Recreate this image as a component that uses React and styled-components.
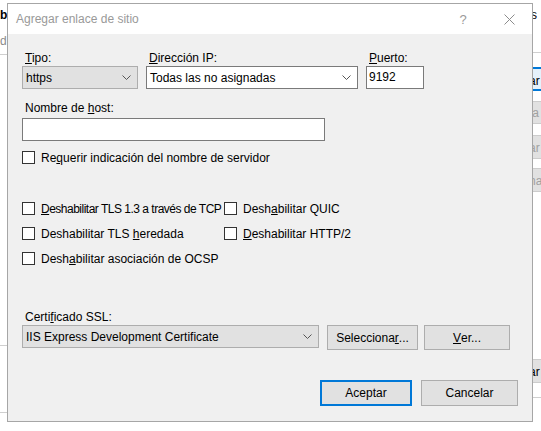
import React from 'react';
import styled, { createGlobalStyle } from 'styled-components';

const GlobalStyle = createGlobalStyle`
  html, body {
    margin: 0;
    padding: 0;
    background: #ffffff;
  }
  body {
    font-family: "Liberation Sans", Arial, sans-serif;
    font-size: 12px;
    color: #000;
  }
`;

const Desktop = styled.div`
  width: 541px;
  height: 431px;
  display: flex;
  align-items: flex-start;
  overflow: hidden;
  background: #fff;
`;

const Peek = styled.div`
  width: ${p => p.w}px;
  height: 431px;
  flex: 0 0 auto;
  display: flex;
  flex-direction: column;
  overflow: hidden;
  white-space: nowrap;
`;

const PeekText = styled.div`
  height: ${p => p.h}px;
  line-height: ${p => p.h}px;
  color: ${p => (p.muted ? '#8a8a8a' : '#000')};
  font-weight: ${p => (p.bold ? 'bold' : 'normal')};
  margin-left: ${p => p.shift || 0}px;
  flex: 0 0 auto;
`;

const PeekLine = styled.div`
  height: 1px;
  background: #cfcfcf;
  margin-top: ${p => p.gap}px;
  flex: 0 0 auto;
`;

const PeekButton = styled.div`
  height: ${p => p.h}px;
  line-height: ${p => p.h}px;
  margin-top: ${p => p.gap}px;
  box-sizing: border-box;
  border: 1px solid ${p => (p.blue ? '#0078d7' : '#cccccc')};
  border-width: ${p => (p.blue ? '2px 0' : '1px 0')};
  background: ${p => (p.blue ? '#e5f1fb' : '#e1e1e1')};
  color: ${p => (p.muted ? '#a0a0a0' : '#000')};
  flex: 0 0 auto;
  margin-left: -4px;
`;

const Dialog = styled.div`
  width: 526px;
  height: 419px;
  margin-top: 3px;
  box-sizing: border-box;
  border: 1px solid #a6a6a6;
  display: flex;
  flex-direction: column;
  flex: 0 0 auto;
  background: #f0f0f0;
`;

const TitleBar = styled.div`
  height: 30px;
  flex: 0 0 auto;
  background: #fff;
  display: flex;
  align-items: center;
  padding-left: 8px;
  color: #999999;
  font-size: 12px;
`;

const Title = styled.div`
  flex: 1;
`;

const Help = styled.div`
  width: 46px;
  text-align: center;
  font-size: 13px;
  color: #9a9a9a;
`;

const Close = styled.div`
  width: 46px;
  height: 30px;
  display: flex;
  align-items: center;
  justify-content: center;
`;

const Body = styled.div`
  flex: 1;
  padding: 16px 0 0 14px;
  display: flex;
  flex-direction: column;
`;

const TopRow = styled.div`
  display: grid;
  grid-template-columns: 116px 212px 58px;
  column-gap: 8px;
`;

const Field = styled.div`
  display: flex;
  flex-direction: column;
`;

const Label = styled.div`
  height: 16px;
  line-height: 16px;
  padding-left: 3px;
  white-space: nowrap;
  margin-top: ${p => p.top || 0}px;
`;

const Combo = styled.div`
  height: 23px;
  width: ${p => (p.w ? `${p.w}px` : 'auto')};
  box-sizing: border-box;
  border: 1px solid ${p => (p.flat ? '#adadad' : '#7a7a7a')};
  background: ${p => (p.flat ? '#e1e1e1' : '#ffffff')};
  display: flex;
  align-items: center;
  padding-left: 3px;
  white-space: nowrap;
`;

const ComboText = styled.span`
  flex: 1;
`;

const Chevron = styled.svg`
  width: 9px;
  height: 5px;
  margin-right: 6px;
`;

const TextBox = styled.div`
  height: 23px;
  width: ${p => (p.w ? `${p.w}px` : 'auto')};
  box-sizing: border-box;
  border: 1px solid #7a7a7a;
  background: #fff;
  padding-left: 2px;
  line-height: 21px;
  margin-top: ${p => p.top || 0}px;
`;

const CheckRow = styled.div`
  display: flex;
  align-items: center;
  height: 13px;
  white-space: nowrap;
  margin-top: ${p => p.top || 0}px;
`;

const CheckText = styled.span`
  letter-spacing: ${p => (p.tight ? '-0.5px' : 'normal')};
`;

const Box = styled.div`
  width: 13px;
  height: 13px;
  box-sizing: border-box;
  border: 1px solid #333333;
  background: #fff;
  flex: 0 0 auto;
  margin-right: 6px;
`;

const CheckGrid = styled.div`
  display: grid;
  grid-template-columns: 202px 200px;
  row-gap: 12px;
  margin-top: 38px;
`;

const CertRow = styled.div`
  display: flex;
  align-items: flex-start;
`;

const Button = styled.div`
  width: ${p => p.w}px;
  height: ${p => p.h || 25}px;
  box-sizing: border-box;
  border: ${p => (p.primary ? '2px solid #0078d7' : '1px solid #adadad')};
  background: #e1e1e1;
  display: flex;
  align-items: center;
  justify-content: center;
  margin-left: ${p => p.gap || 0}px;
  flex: 0 0 auto;
`;

const Footer = styled.div`
  display: flex;
  margin-top: 30px;
  padding-left: 298px;
`;

const ChevronIcon = () => (
  <Chevron viewBox="0 0 9 5">
    <path d="M0.5 0.5 L4.5 4.5 L8.5 0.5" fill="none" stroke="#555" strokeWidth="1" />
  </Chevron>
);

const Check = ({ children, top, tight }) => (
  <CheckRow top={top}>
    <Box />
    <CheckText tight={tight}>{children}</CheckText>
  </CheckRow>
);

export default function App() {
  return (
    <>
      <GlobalStyle />
      <Desktop>
        <Peek w={7}>
          <PeekText h={30} bold>b</PeekText>
          <PeekText h={22} muted>d</PeekText>
          <PeekLine gap={2} />
          <PeekLine gap={290} />
          <PeekLine gap={66} />
        </Peek>
        <Dialog>
          <TitleBar>
            <Title>Agregar enlace de sitio</Title>
            <Help>?</Help>
            <Close>
              <svg width="11" height="11" viewBox="0 0 11 11">
                <path d="M0.5 0.5 L10.5 10.5 M10.5 0.5 L0.5 10.5" stroke="#8c8c8c" strokeWidth="1" />
              </svg>
            </Close>
          </TitleBar>
          <Body>
            <TopRow>
              <Field>
                <Label><u>T</u>ipo:</Label>
                <Combo flat>
                  <ComboText>https</ComboText>
                  <ChevronIcon />
                </Combo>
              </Field>
              <Field>
                <Label><u>D</u>irección IP:</Label>
                <Combo>
                  <ComboText>Todas las no asignadas</ComboText>
                  <ChevronIcon />
                </Combo>
              </Field>
              <Field>
                <Label><u>P</u>uerto:</Label>
                <TextBox>9192</TextBox>
              </Field>
            </TopRow>
            <Label top={11}>Nombre de <u>h</u>ost:</Label>
            <TextBox w={303} top={2} />
            <Check top={10}>Re<u>q</u>uerir indicación del nombre de servidor</Check>
            <CheckGrid>
              <Check tight><u>D</u>eshabilitar TLS 1.3 a través de TCP</Check>
              <Check>Desh<u>a</u>bilitar QUIC</Check>
              <Check>Deshabilitar TLS <u>h</u>eredada</Check>
              <Check><u>D</u>eshabilitar HTTP/2</Check>
              <Check>Desh<u>a</u>bilitar asociación de OCSP</Check>
            </CheckGrid>
            <Label top={44}>Certi<u>f</u>icado SSL:</Label>
            <CertRow>
              <Combo flat w={297}>
                <ComboText>IIS Express Development Certificate</ComboText>
                <ChevronIcon />
              </Combo>
              <Button w={91} gap={8}>Selecciona<u>r</u>...</Button>
              <Button w={86} gap={6}><u>V</u>er...</Button>
            </CertRow>
            <Footer>
              <Button w={92} h={26} primary>Aceptar</Button>
              <Button w={97} h={26} gap={9}>Cancelar</Button>
            </Footer>
          </Body>
        </Dialog>
        <Peek w={8}>
          <PeekText h={30} shift={-2}>s</PeekText>
          <PeekLine gap={22} />
          <PeekButton h={24} gap={14} blue>ar</PeekButton>
          <PeekButton h={23} gap={10} muted>ta</PeekButton>
          <PeekButton h={24} gap={11} muted>ar</PeekButton>
          <PeekButton h={24} gap={9} muted>na</PeekButton>
          <PeekButton h={24} gap={167}>ar</PeekButton>
          <PeekLine gap={14} />
        </Peek>
      </Desktop>
    </>
  );
}
